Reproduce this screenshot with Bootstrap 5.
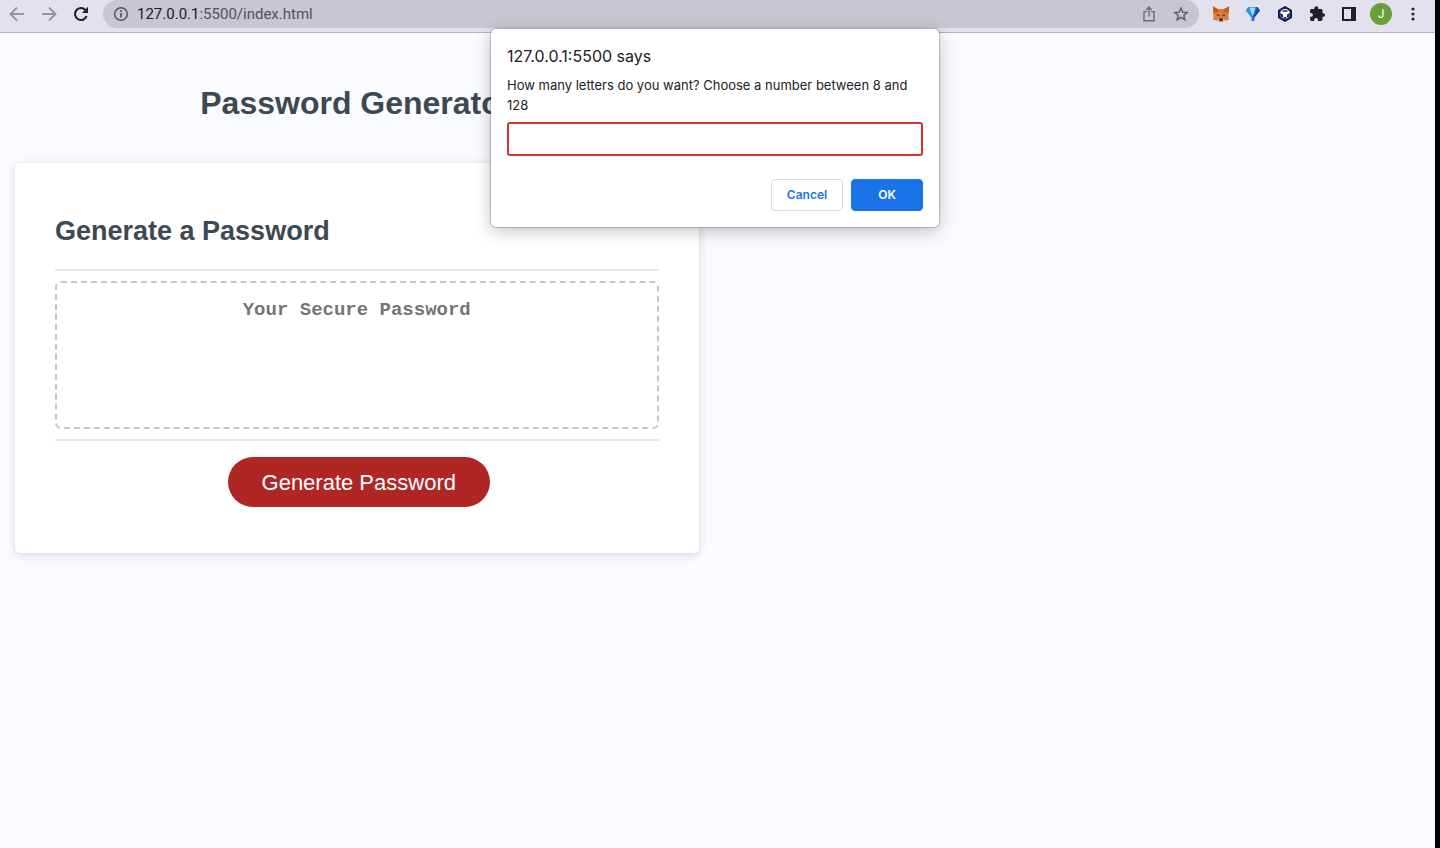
<!DOCTYPE html>
<html lang="en">
<head>
<meta charset="utf-8">
<meta name="viewport" content="width=device-width, initial-scale=1">
<title>Password Generator</title>
<link href="https://cdn.jsdelivr.net/npm/bootstrap@5.3.0/dist/css/bootstrap.min.css" rel="stylesheet">
<style>
  body { background: #fafbff; font-family: "Liberation Sans", Arial, sans-serif; }
  .browser-window { border-right: 5px solid #000; }
  .toolbar { height: 33px; background: #e2e2ef; border-bottom: 1px solid #b2b2bf; font-family: Roboto, sans-serif; padding: 0 13px 4px 8px; }
  .tool { width: 18px; height: 18px; padding: 0; border: 0; background: none; display: flex; align-items: center; justify-content: center; flex: none; }
  .tool svg { display: block; }
  .nav-tools { gap: 14px; margin-right: 13px; }
  .ext-tools { gap: 14px; margin-left: 13px; }
  .omnibox { height: 28px; border-radius: 14px; background: #c7c6d1; padding: 0 9px; }
  .address { font-size: 15px; line-height: 28px; color: #52525b; margin-left: 7px; }
  .address b { font-weight: 400; color: #1f2024; }
  .avatar { width: 22px; height: 22px; border-radius: 50%; background: #689f38; color: #fff; font-size: 12px; line-height: 22px; margin: 0 -2px; }
  .generator { padding: 48px 19px 0 15px; color: #3c4953; }
  h1, h2 { font-weight: 700; }
  h1 { font-size: 32px; line-height: 44px; margin-bottom: 38px; }
  h2 { font-size: 27px; line-height: 36px; margin-bottom: 20px; }
  .panel { background: #fff; border-radius: 5px; padding: 50px 40px 46px; box-shadow: 0 2px 8px rgba(60,60,80,.2); }
  .panel-middle { border-top: 2px solid #e6e6eb; border-bottom: 2px solid #e6e6eb; padding: 10px 0; }
  .secret { display: block; height: 148px; border: 2px dashed #c0c7d0; border-radius: 6px; padding: 15px; resize: none; text-align: center; font: 700 19px/24px "Liberation Mono", monospace; outline: 0; }
  .secret::placeholder { color: #757575; }
  .generate { background: #b02625; color: #fff; border: 0; border-radius: 25px; height: 50px; padding: 0 34px; font-size: 22px; }
  .prompt-box { position: absolute; top: 29px; left: 0; right: 5px; margin: 0 auto; width: 448px; background: #fff; border-radius: 5px; padding: 16px; box-shadow: 0 0 1px 1px rgba(0,0,0,.2), 0 4px 18px rgba(0,0,0,.24); font-family: Inter, Roboto, sans-serif; color: #202124; }
  .prompt-title { font-size: 16px; line-height: 22px; margin-bottom: 8px; font-weight: 400; }
  .prompt-text { display: block; font-size: 13px; line-height: 20px; margin-bottom: 7px; }
  .prompt-input { display: block; width: 100%; height: 34px; border: 2px solid #d93030; border-radius: 3px; outline: 0; padding: 0 8px; font-size: 13px; }
  .prompt-actions { margin-top: 23px; }
  .prompt-btn { width: 72px; height: 32px; padding: 0; border-radius: 4px; font-size: 12px; font-weight: 600; color: #1a73e8; border: 1px solid #dadce0; background: #fff; }
  .prompt-btn.ok { background: #1a73e8; border-color: #1a73e8; color: #fff; }
</style>
</head>
<body>
<div class="browser-window min-vh-100 position-relative">
  <header class="toolbar d-flex align-items-center">
    <div class="nav-tools d-flex">
      <button class="tool" aria-label="Back"><svg width="18" height="18" viewBox="0 0 18 18" fill="none" stroke="#93939c" stroke-width="1.8"><path d="M16 9H3M9 2.5 2.5 9 9 15.500"/></svg></button>
      <button class="tool" aria-label="Forward"><svg width="18" height="18" viewBox="0 0 18 18" fill="none" stroke="#93939c" stroke-width="1.8"><path d="M2 9H15M9 2.500 15.500 9 9 15.500"/></svg></button>
      <button class="tool" aria-label="Reload"><svg width="18" height="18" viewBox="0 0 18 18"><path d="M14.600 11.200A6 6 0 1 1 13.400 4.900" fill="none" stroke="#202124" stroke-width="2.100"/><path d="M16 1.800V8H9.800Z" fill="#202124"/></svg></button>
    </div>
    <div class="omnibox d-flex align-items-center flex-grow-1">
      <button class="tool" aria-label="Site information"><svg width="18" height="18" viewBox="0 0 18 18"><circle cx="9" cy="9" r="6.300" fill="none" stroke="#505057" stroke-width="1.400"/><path d="M9 8v4.500M9 5.300v1.600" stroke="#505057" stroke-width="1.600"/></svg></button>
      <div class="address flex-grow-1"><b>127.0.0.1</b>:5500/index.html</div>
      <div class="nav-tools d-flex me-0">
        <button class="tool" aria-label="Share"><svg width="18" height="18" viewBox="0 0 18 18" fill="none" stroke="#6b6b73" stroke-width="1.400"><path d="M6.800 6.600H4V15.800H14V6.600H11.200M9 11.500V2.500M6.200 5.100 9 2.300 11.800 5.100"/></svg></button>
        <button class="tool" aria-label="Bookmark"><svg width="18" height="18" viewBox="0 0 18 18" fill="none" stroke="#5c5c64" stroke-width="1.400"><path d="M9 3 10.700 7.100l4.400.4-3.300 2.900 1 4.300L9 12.400 5.200 14.700l1-4.300-3.300-2.900 4.400-.4Z"/></svg></button>
      </div>
    </div>
    <div class="ext-tools d-flex align-items-center">
      <button class="tool" aria-label="MetaMask"><svg width="18" height="18" viewBox="0 0 18 18"><path d="M1 1.200 6.500 4h5L17 1.200V7l-.6 3 .4 5-4.300.6-1.700 1.200H7.200l-1.700-1.200-4.300-.6.400-5L1 7Z" fill="#e07a35"/><path d="M1 1.200 6.500 5 5.500 7.500 1.500 8ZM17 1.200 11.500 5l1 2.500 4 .5Z" fill="#b8602c"/><path d="m5 9.200 2.300.9.200 1.100-2.600-.6ZM13 9.200l-2.300.9-.2 1.100 2.600-.6Z" fill="#42302c"/><path d="M7.500 13.500h3l.4 2.200H7.100Z" fill="#20242b"/><path d="m5.500 14 1.600.3v1.900l-1.500-1ZM12.500 14l-1.600.3v1.900l1.500-1Z" fill="#d7c1b3"/></svg></button>
      <button class="tool" aria-label="Diamond wallet"><svg width="18" height="18" viewBox="0 0 18 18"><path d="M4.500 2h9L16 5.500l-5.500 7V16h-3v-3.500L2 5.500Z" fill="#1c6fc9"/><path d="m2 5.500 2.500-3.500H7l2 10.500H7.500Z" fill="#2f93e6"/><path d="M5.500 2.500h6L10 7.500 8.700 11Z" fill="#a5defa"/><path d="M13.500 2 16 5.500l-5.500 7H9.300L12 6Z" fill="#164a97"/></svg></button>
      <button class="tool" aria-label="Crypto wallet"><svg width="18" height="18" viewBox="0 0 18 18"><path d="m9 1.500 6.500 3.700v7.600L9 16.500l-6.500-3.700V5.200Z" fill="#13235f" stroke="#0b1a4c"/><circle cx="9" cy="9" r="5" fill="#fff"/><path d="M6.800 5.200h4.400l.5 1.500H6.300ZM4.300 8l2.500 1.600.5 3H5.600L4 9.500ZM13.700 8l-2.500 1.600-.5 3h1.700L14 9.500ZM8 12h2l.7 1.800H7.300Z" fill="#13235f"/></svg></button>
      <button class="tool" aria-label="Extensions"><svg width="18" height="18" viewBox="0 0 18 18"><path d="M15.300 8.200h-.8V5.300c0-.8-.6-1.400-1.400-1.400h-2.800v-.6a2 2 0 0 0-4 0v.6H3.500c-.8 0-1.400.6-1.400 1.400V8h.9a1.900 1.900 0 0 1 0 3.800h-.9v2.700c0 .8.600 1.400 1.400 1.400h2.700V15a1.900 1.900 0 0 1 3.800 0v.9h3.100c.8 0 1.400-.6 1.400-1.400v-2.700h.8a1.800 1.800 0 0 0 0-3.600Z" fill="#202124"/></svg></button>
      <button class="tool" aria-label="Side panel"><svg width="18" height="18" viewBox="0 0 18 18"><path fill-rule="evenodd" d="M2 2h14v14H2ZM4 4v10h7V4Z" fill="#202124"/></svg></button>
      <button class="tool avatar" aria-label="Profile J">J</button>
      <button class="tool" aria-label="Menu"><svg width="18" height="18" viewBox="0 0 18 18" fill="#28282d"><circle cx="9" cy="4" r="1.600"/><circle cx="9" cy="9" r="1.600"/><circle cx="9" cy="14" r="1.600"/></svg></button>
    </div>
  </header>

  <main class="generator col-6">
    <h1 class="text-center">Password Generator</h1>
    <section class="panel">
      <h2>Generate a Password</h2>
      <div class="panel-middle">
        <textarea class="secret w-100" readonly placeholder="Your Secure Password" aria-label="Your Secure Password"></textarea>
      </div>
      <div class="text-center pt-3 ps-1"><button class="generate" type="button">Generate Password</button></div>
    </section>
  </main>

  <form class="prompt-box" role="dialog" aria-labelledby="promptTitle">
    <h3 class="prompt-title" id="promptTitle">127.0.0.1:5500 says</h3>
    <label class="prompt-text" for="promptInput">How many letters do you want? Choose a number between 8 and 128</label>
    <input class="prompt-input" id="promptInput" type="text">
    <div class="prompt-actions d-flex justify-content-end gap-2">
      <button class="prompt-btn" type="button">Cancel</button>
      <button class="prompt-btn ok" type="button">OK</button>
    </div>
  </form>
</div>
<script src="https://cdn.jsdelivr.net/npm/bootstrap@5.3.0/dist/js/bootstrap.bundle.min.js"></script>
</body>
</html>
